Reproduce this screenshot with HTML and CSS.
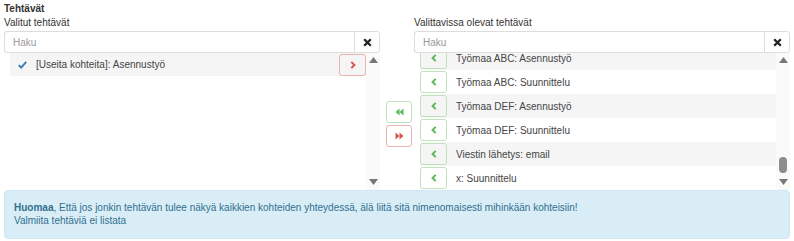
FILE: index.html
```html
<!DOCTYPE html>
<html lang="fi">
<head>
    <meta charset="UTF-8">
    <meta name="viewport" content="width=device-width, initial-scale=1.0">
    <title>Tehtävät</title>
    <link rel="stylesheet" href="styles.css">
</head>
<body>
    <div class="page">
        <div class="title">Tehtävät</div>
        <div class="picker">
            <!-- valitut -->
            <div class="col">
                <div class="label">Valitut tehtävät</div>
                <div class="search">
                    <input class="search-input" type="text" placeholder="Haku">
                    <button class="clear">
                        <svg width="9" height="9" viewBox="0 0 9 9"><path d="M1.2 1.2L7.8 7.8M7.8 1.2L1.2 7.8" stroke="#222" stroke-width="2.3"/></svg>
                    </button>
                </div>
                <div class="list-area">
                    <div class="list">
                        <div class="row grey">
                            <svg class="check" width="9" height="8" viewBox="0 0 9 8"><path d="M0.8 4.2L3.2 6.6L8.2 0.9" stroke="#337ab7" stroke-width="1.9" fill="none"/></svg>
                            <span class="row-text">[Useita kohteita]: Asennustyö</span>
                            <button class="btn btn-red row-btn">
                                <svg width="6" height="8" viewBox="0 0 6 8"><path d="M1.3 0.9L4.4 4L1.3 7.1" stroke="#d9534f" stroke-width="2" fill="none"/></svg>
                            </button>
                        </div>
                    </div>
                    <div class="scrollbar">
                        <svg class="arrow" width="9" height="6" viewBox="0 0 9 6"><path d="M0 6L4.5 0L9 6Z" fill="#777"/></svg>
                        <div class="track"></div>
                        <svg class="arrow" width="9" height="6" viewBox="0 0 9 6"><path d="M0 0L4.5 6L9 0Z" fill="#777"/></svg>
                    </div>
                </div>
            </div>

            <!-- siirrot -->
            <div class="moves">
                <button class="btn btn-green">
                    <svg width="9" height="8" viewBox="0 0 9 8"><path d="M4.5 0.5L0.5 4L4.5 7.5ZM8.5 0.5L4.5 4L8.5 7.5Z" fill="#5cb85c"/></svg>
                </button>
                <button class="btn btn-red">
                    <svg width="9" height="8" viewBox="0 0 9 8"><path d="M0.5 0.5L4.5 4L0.5 7.5ZM4.5 0.5L8.5 4L4.5 7.5Z" fill="#d9534f"/></svg>
                </button>
            </div>

            <!-- valittavissa -->
            <div class="col">
                <div class="label">Valittavissa olevat tehtävät</div>
                <div class="search">
                    <input class="search-input" type="text" placeholder="Haku">
                    <button class="clear">
                        <svg width="9" height="9" viewBox="0 0 9 9"><path d="M1.2 1.2L7.8 7.8M7.8 1.2L1.2 7.8" stroke="#222" stroke-width="2.3"/></svg>
                    </button>
                </div>
                <div class="list-area">
                    <div class="list">
                        <div class="list-inner" id="available"></div>
                    </div>
                    <div class="scrollbar">
                        <svg class="arrow" width="9" height="6" viewBox="0 0 9 6"><path d="M0 6L4.5 0L9 6Z" fill="#777"/></svg>
                        <div class="track"><div class="thumb"></div></div>
                        <svg class="arrow" width="9" height="6" viewBox="0 0 9 6"><path d="M0 0L4.5 6L9 0Z" fill="#777"/></svg>
                    </div>
                </div>
            </div>
        </div>

        <div class="alert">
            <b>Huomaa</b>, Että jos jonkin tehtävän tulee näkyä kaikkien kohteiden yhteydessä, älä liitä sitä nimenomaisesti mihinkään kohteisiin!<br>
            Valmiita tehtäviä ei listata
        </div>
    </div>

    <script>
        // valittavissa olevat tehtävät
        const tasks = [
            'Työmaa ABC: Asennustyö',
            'Työmaa ABC: Suunnittelu',
            'Työmaa DEF: Asennustyö',
            'Työmaa DEF: Suunnittelu',
            'Viestin lähetys: email',
            'x: Suunnittelu'
        ];
        const available = document.querySelector('#available');

        tasks.forEach((task, i) => {
            const row = document.createElement('div');
            row.className = i % 2 === 0 ? 'row grey' : 'row';
            row.innerHTML = `
                <button class="btn btn-green row-btn">
                    <svg width="6" height="8" viewBox="0 0 6 8"><path d="M4.7 0.9L1.6 4L4.7 7.1" stroke="#5cb85c" stroke-width="2" fill="none"/></svg>
                </button>
                <span class="row-text">${task}</span>`;
            available.appendChild(row);
        });
    </script>
</body>
</html>
```

FILE: styles.css
```css
* {
    margin: 0;
    padding: 0;
    box-sizing: border-box;
}

body {
    font-family: "Liberation Sans", Arial, sans-serif;
    font-size: 10px;
    color: #333;
    background: #fff;
}

.page {
    padding: 2px 4px 0 4px;
}

.title {
    font-weight: bold;
    line-height: 14px;
}

.picker {
    display: flex;
}

.col {
    width: 376px;
    flex-shrink: 0;
}

.label {
    line-height: 14px;
    margin-bottom: 1px;
}

.search {
    display: flex;
    height: 22px;
}

.search-input {
    flex: 1;
    border: 1px solid #ddd;
    border-right: none;
    border-radius: 3px 0 0 3px;
    padding-left: 8px;
    font-family: inherit;
    font-size: 10px;
    color: #555;
    outline: none;
}

.search-input::placeholder {
    color: #999;
}

.clear {
    width: 26px;
    border: 1px solid #ddd;
    border-radius: 0 3px 3px 0;
    background: #fff;
    display: flex;
    justify-content: center;
    align-items: center;
}

.list-area {
    display: flex;
    height: 137px;
    padding-left: 6px;
}

.list {
    flex: 1;
    overflow: hidden;
}

.list-inner {
    margin-top: -7px;
}

.row {
    display: flex;
    align-items: center;
    height: 24px;
}

.row.grey {
    background: #f5f5f5;
}

.col:first-child .row {
    height: 23px;
    padding-left: 8px;
}

.check {
    margin-right: 9px;
}

.row-text {
    flex: 1;
    color: #444;
}

.btn {
    width: 27px;
    height: 22px;
    border-radius: 3px;
    background: transparent;
    display: flex;
    justify-content: center;
    align-items: center;
}

.btn-red {
    border: 1px solid #ebb2b1;
}

.btn-green {
    border: 1px solid #bfe3bf;
}

.col:first-child .row-btn {
    align-self: flex-start;
    margin-top: 1px;
}

.col:last-child .row-btn {
    margin-right: 9px;
}

.scrollbar {
    width: 14px;
    background: #fafafa;
    display: flex;
    flex-direction: column;
    align-items: center;
    padding: 4px 0 5px 0;
}

.track {
    flex: 1;
    display: flex;
    flex-direction: column;
    justify-content: flex-end;
    padding-bottom: 6px;
}

.thumb {
    width: 8px;
    height: 16px;
    border-radius: 4px;
    background: #8c8c8c;
}

.moves {
    width: 34px;
    padding: 85px 0 0 6px;
    display: flex;
    flex-direction: column;
    gap: 2px;
}

.moves .btn {
    width: 26px;
}

.alert {
    margin-top: 0;
    background: #d9edf7;
    border: 1px solid #cde7f3;
    border-radius: 4px;
    color: #31708f;
    line-height: 13px;
    padding: 10px 9px 10px 9px;
    height: 49px;
}
```
